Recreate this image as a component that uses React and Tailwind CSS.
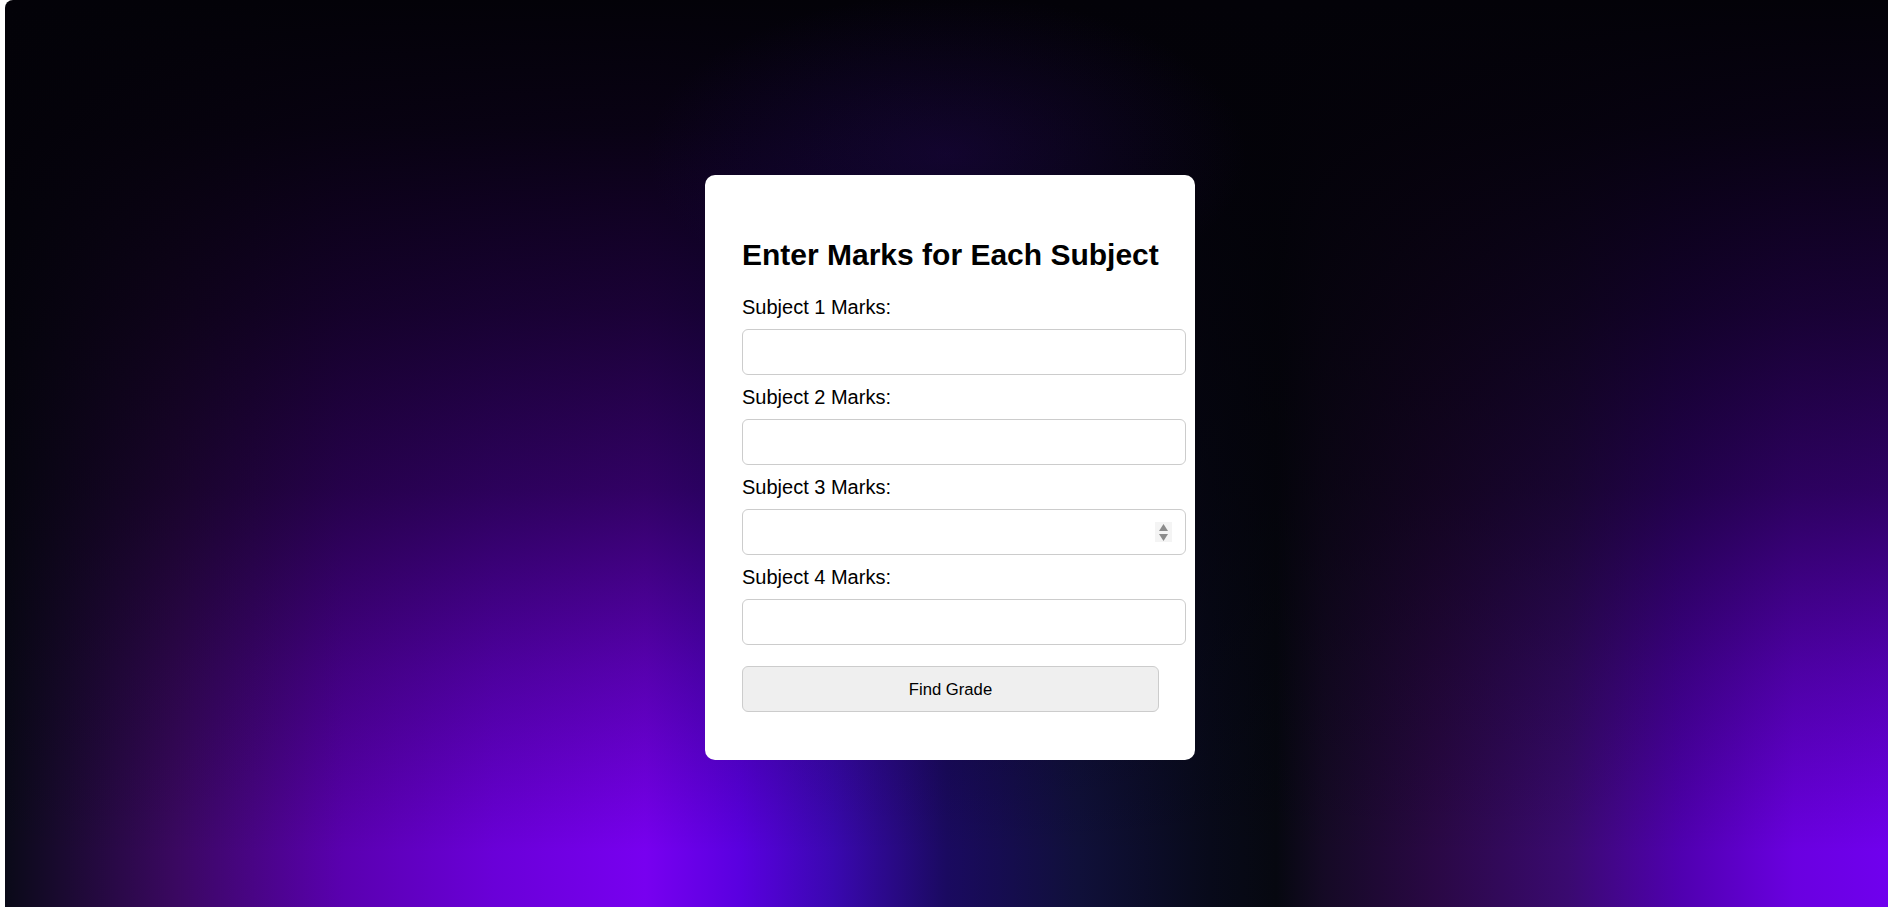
import React from 'react';

const subjects = [1, 2, 3, 4];

function Spinner() {
  return (
    <div className="absolute right-[14px] top-[13px] w-[17px] h-[20px] bg-[#f4f4f4] flex flex-col items-center justify-center gap-[3px]">
      <svg width="9" height="7" viewBox="0 0 9 7"><path d="M4.5 0 L9 7 L0 7 Z" fill="#8c8c8c" /></svg>
      <svg width="9" height="7" viewBox="0 0 9 7"><path d="M0 0 L9 0 L4.5 7 Z" fill="#8c8c8c" /></svg>
    </div>
  );
}

export default function App() {
  return (
    <div className="min-h-screen bg-white flex font-['Liberation_Sans',Arial,sans-serif]">
      <div
        className="flex-1 ml-[5px] rounded-tl-[8px] min-h-[907px] flex justify-center items-start pl-[7px] pt-[175px]
                   bg-[radial-gradient(ellipse_300px_160px_at_50%_17%,rgba(50,10,120,0.3),transparent),linear-gradient(to_bottom,rgba(3,2,8,1)_0%,rgba(3,2,8,0.95)_14%,rgba(3,2,8,0.8)_34%,rgba(3,2,8,0.6)_54%,rgba(3,2,8,0.28)_74%,rgba(3,2,8,0)_94%),linear-gradient(to_right,#0a0a18_0%,#1a0a30_3%,#3a0860_9%,#5a00b0_18%,#6a00d8_26%,#7800f0_34%,#5a00e0_39%,#3a08b0_44%,#1a0a60_50%,#10103a_57%,#080a1a_64%,#060810_67.5%,#150a25_70%,#2a0845_76%,#3a0a70_83%,#5000b0_89%,#6a00e0_95%,#7000ee_100%)]"
      >
        <div className="w-[490px] bg-white rounded-[10px] pt-[62px] pb-[48px] pl-[37px] pr-[9px] text-black">
          <h2 className="text-[30px] leading-[35px] font-bold mb-[24px]">Enter Marks for Each Subject</h2>
          {subjects.map((n) => (
            <div key={n}>
              <label className="block text-[20px] leading-[23px] mb-[10px]">Subject {n} Marks:</label>
              <div className="relative mb-[11px]">
                <input
                  type="text"
                  className="block w-full h-[46px] rounded-[6px] border border-[#cccccc] bg-white outline-none px-[12px] text-[20px]"
                />
                {n === 3 && <Spinner />}
              </div>
            </div>
          ))}
          <button className="mt-[21px] w-[417px] h-[46px] rounded-[6px] border border-[#cccccc] bg-[#efefef] text-[16.67px] text-black flex items-center justify-center">
            Find Grade
          </button>
        </div>
      </div>
    </div>
  );
}
